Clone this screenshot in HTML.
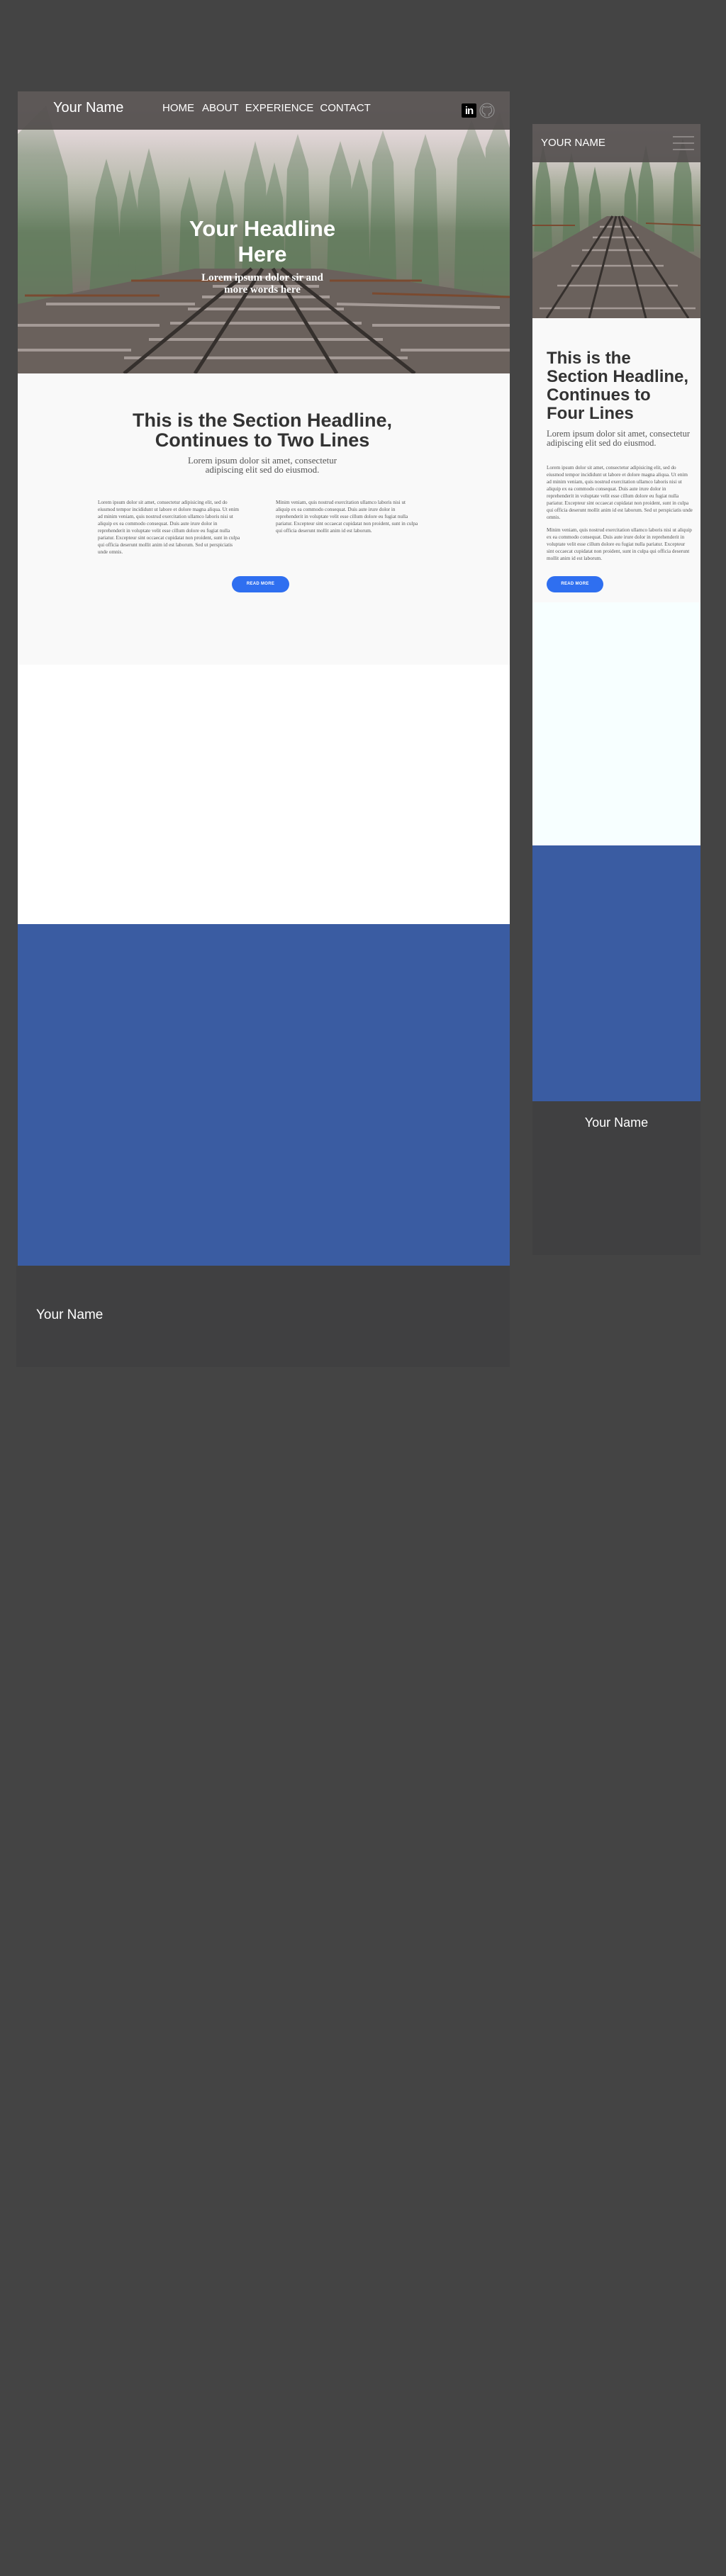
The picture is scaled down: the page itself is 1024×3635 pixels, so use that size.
<!DOCTYPE html>
<html><head><meta charset="utf-8">
<style>
*{margin:0;padding:0;box-sizing:border-box}
html,body{width:1024px;height:3635px;background:#444444;overflow:hidden}
body{position:relative;font-family:"Liberation Sans",sans-serif}
.abs{position:absolute}
.serif{font-family:"Liberation Serif",serif}
.hero{background:linear-gradient(180deg,#eadadc 0%,#d9cfcf 15%,#a9ae9c 32%,#7f8b74 48%,#76806b 62%,#7c736d 72%,#5f5752 85%,#3f3834 100%)}
.body7{font-family:"Liberation Serif",serif;font-size:7.2px;line-height:10px;color:#555}
.btn{background:#2f6ff0;color:#fff;border-radius:12px;font-size:6px;font-weight:bold;text-align:center;line-height:23px;letter-spacing:.3px}
</style></head><body>

<!-- DESKTOP -->
<div class="abs hero" style="left:25px;top:129px;width:694px;height:398px;overflow:hidden">
<svg width="694" height="398" style="position:absolute;left:0;top:0">
<defs><linearGradient id="fog" x1="0" y1="0" x2="0" y2="1"><stop offset="0" stop-color="#efe1e3" stop-opacity=".9"/><stop offset=".45" stop-color="#e0d6d6" stop-opacity=".35"/><stop offset="1" stop-color="#fff" stop-opacity="0"/></linearGradient></defs>
<g fill="#5e7a5a" opacity=".7">
<polygon points="0,60 40,20 70,120 80,330 0,330"/>
<polygon points="110,150 125,95 140,150 150,300 100,300"/>
<polygon points="145,170 158,110 170,170 175,300 140,300"/>
<polygon points="170,140 185,80 200,140 205,300 165,300"/>
<polygon points="230,170 242,120 254,170 258,300 226,300"/>
<polygon points="280,160 292,110 304,160 308,300 276,300"/>
<polygon points="320,130 335,70 350,130 355,300 315,300"/>
<polygon points="350,150 362,100 374,150 378,300 346,300"/>
<polygon points="380,110 395,60 410,110 415,300 375,300"/>
<polygon points="440,120 455,70 470,120 475,300 435,300"/>
<polygon points="470,140 482,95 494,140 498,300 466,300"/>
<polygon points="500,100 515,55 530,100 535,300 495,300"/>
<polygon points="560,110 575,60 590,110 595,300 555,300"/>
<polygon points="620,95 640,40 660,95 665,300 615,300"/>
<polygon points="660,80 680,30 694,80 694,300 655,300"/>
</g>
<rect width="694" height="200" fill="url(#fog)"/>
<polygon points="0,398 694,398 694,290 430,250 250,250 0,300" fill="#6a615c"/>
<g stroke="#b8aeaa" stroke-width="4" opacity=".75">
<line x1="290" y1="262" x2="410" y2="262"/><line x1="275" y1="275" x2="425" y2="275"/><line x1="260" y1="290" x2="440" y2="290"/><line x1="240" y1="307" x2="460" y2="307"/><line x1="215" y1="327" x2="485" y2="327"/><line x1="185" y1="350" x2="515" y2="350"/><line x1="150" y1="376" x2="550" y2="376"/><line x1="40" y1="300" x2="250" y2="300"/><line x1="450" y1="300" x2="680" y2="305"/><line x1="0" y1="330" x2="200" y2="330"/><line x1="500" y1="330" x2="694" y2="330"/><line x1="0" y1="365" x2="160" y2="365"/><line x1="540" y1="365" x2="694" y2="365"/>
</g>
<g stroke="#35302d" stroke-width="5">
<line x1="330" y1="250" x2="150" y2="398"/><line x1="345" y1="250" x2="250" y2="398"/>
<line x1="360" y1="250" x2="450" y2="398"/><line x1="372" y1="250" x2="560" y2="398"/>
</g>
<g stroke="#7a4a30" stroke-width="3"><line x1="160" y1="267" x2="290" y2="267"/><line x1="440" y1="267" x2="570" y2="267"/><line x1="10" y1="288" x2="200" y2="288"/><line x1="500" y1="285" x2="694" y2="290"/></g>
</svg>
</div>
<div class="abs" style="left:25px;top:129px;width:694px;height:54px;background:rgba(80,76,75,.92)"></div>
<div class="abs" style="left:75px;top:141px;color:#fff;font-size:20px">Your Name</div>
<div class="abs" style="left:229px;top:144px;color:#fff;font-size:15px"><span>HOME</span><span style="margin-left:11px">ABOUT</span><span style="margin-left:9px">EXPERIENCE</span><span style="margin-left:9px">CONTACT</span></div>
<div class="abs" style="left:651px;top:146px;width:21px;height:20px;background:#000;border-radius:2px;color:#fff;font-weight:bold;font-size:15px;line-height:21px;text-align:center;letter-spacing:-1px">in</div>
<svg class="abs" style="left:676px;top:145px" width="22" height="22" viewBox="0 0 22 22"><circle cx="11" cy="11" r="10" fill="none" stroke="#999" stroke-width="1"/><path d="M8 19v-3c-2-1-4-2-4-6 0-1 .5-2 1-2.5-.2-.7 0-1.8.3-2.2 1 0 2 .6 2.5 1 2-.5 4-.5 6 0 .5-.4 1.5-1 2.5-1 .3.4.5 1.5.3 2.2.5.5 1 1.5 1 2.5 0 4-2 5-4 6v3" fill="none" stroke="#999" stroke-width="1"/></svg>

<div class="abs" style="left:200px;top:305px;width:340px;text-align:center;color:#fff;font-weight:bold;font-size:31px;line-height:36px">Your Headline<br>Here</div>
<div class="abs serif" style="left:250px;top:384px;width:240px;text-align:center;color:#fff;font-weight:bold;font-size:15px;line-height:17px">Lorem ipsum dolor sir and<br>more words here</div>

<div class="abs" style="left:25px;top:527px;width:694px;height:411px;background:#f9f9f9"></div>
<div class="abs" style="left:120px;top:579px;width:500px;text-align:center;color:#333;font-weight:bold;font-size:27px;line-height:28px">This is the Section Headline,<br>Continues to Two Lines</div>
<div class="abs serif" style="left:220px;top:643px;width:300px;text-align:center;color:#555;font-size:13px;line-height:13px">Lorem ipsum dolor sit amet, consectetur<br>adipiscing elit sed do eiusmod.</div>
<div class="abs body7" style="left:138px;top:704px;width:205px">Lorem ipsum dolor sit amet, consectetur adipisicing elit, sed do eiusmod tempor incididunt ut labore et dolore magna aliqua. Ut enim ad minim veniam, quis nostrud exercitation ullamco laboris nisi ut aliquip ex ea commodo consequat. Duis aute irure dolor in reprehenderit in voluptate velit esse cillum dolore eu fugiat nulla pariatur. Excepteur sint occaecat cupidatat non proident, sunt in culpa qui officia deserunt mollit anim id est laborum. Sed ut perspiciatis unde omnis.</div>
<div class="abs body7" style="left:389px;top:704px;width:202px">Minim veniam, quis nostrud exercitation ullamco laboris nisi ut aliquip ex ea commodo consequat. Duis aute irure dolor in reprehenderit in voluptate velit esse cillum dolore eu fugiat nulla pariatur. Excepteur sint occaecat cupidatat non proident, sunt in culpa qui officia deserunt mollit anim id est laborum.</div>
<div class="abs btn" style="left:327px;top:813px;width:81px;height:23px">READ MORE</div>

<div class="abs" style="left:25px;top:938px;width:694px;height:366px;background:#fff"></div>
<div class="abs" style="left:25px;top:1304px;width:694px;height:482px;background:#3a5ca2"></div>
<div class="abs" style="left:23px;top:1786px;width:696px;height:143px;background:#404041"></div>
<div class="abs" style="left:51px;top:1845px;color:#fff;font-size:19px">Your Name</div>

<!-- MOBILE -->
<div class="abs hero" style="left:751px;top:175px;width:237px;height:274px;overflow:hidden">
<svg width="237" height="274" style="position:absolute;left:0;top:0">
<g fill="#5e7a5a" opacity=".7">
<polygon points="5,80 15,30 25,80 28,180 2,180"/><polygon points="45,90 55,40 65,90 68,180 42,180"/><polygon points="80,100 88,60 96,100 98,180 78,180"/><polygon points="130,100 138,60 146,100 148,180 128,180"/><polygon points="150,80 160,30 170,80 173,180 147,180"/><polygon points="200,70 212,20 224,70 228,180 196,180"/>
</g>
<polygon points="0,274 237,274 237,190 130,130 105,130 0,190" fill="#6a615c"/>
<g stroke="#b8aeaa" stroke-width="2.5" opacity=".75"><line x1="95" y1="145" x2="140" y2="145"/><line x1="85" y1="160" x2="150" y2="160"/><line x1="70" y1="178" x2="165" y2="178"/><line x1="55" y1="200" x2="185" y2="200"/><line x1="35" y1="228" x2="205" y2="228"/><line x1="10" y1="260" x2="230" y2="260"/></g>
<g stroke="#35302d" stroke-width="3"><line x1="113" y1="130" x2="20" y2="274"/><line x1="118" y1="130" x2="80" y2="274"/><line x1="122" y1="130" x2="160" y2="274"/><line x1="126" y1="130" x2="220" y2="274"/></g>
<g stroke="#7a4a30" stroke-width="2"><line x1="0" y1="143" x2="60" y2="143"/><line x1="160" y1="140" x2="237" y2="143"/></g>
</svg>
</div>
<div class="abs" style="left:751px;top:175px;width:237px;height:54px;background:rgba(84,80,79,.93)"></div>
<div class="abs" style="left:763px;top:193px;color:#fff;font-size:15px">YOUR NAME</div>
<div class="abs" style="left:949px;top:192px;width:30px;height:2px;background:#8a8584"></div>
<div class="abs" style="left:949px;top:201px;width:30px;height:2px;background:#8a8584"></div>
<div class="abs" style="left:949px;top:210px;width:30px;height:2px;background:#8a8584"></div>

<div class="abs" style="left:751px;top:449px;width:237px;height:401px;background:#f9f9f9"></div>
<div class="abs" style="left:771px;top:493px;width:215px;color:#333;font-weight:bold;font-size:24px;line-height:26px">This is the<br>Section Headline,<br>Continues to<br>Four Lines</div>
<div class="abs serif" style="left:771px;top:606px;width:215px;color:#555;font-size:12.5px;line-height:13px">Lorem ipsum dolor sit amet, consectetur adipiscing elit sed do eiusmod.</div>
<div class="abs body7" style="left:771px;top:655px;width:206px">Lorem ipsum dolor sit amet, consectetur adipisicing elit, sed do eiusmod tempor incididunt ut labore et dolore magna aliqua. Ut enim ad minim veniam, quis nostrud exercitation ullamco laboris nisi ut aliquip ex ea commodo consequat. Duis aute irure dolor in reprehenderit in voluptate velit esse cillum dolore eu fugiat nulla pariatur. Excepteur sint occaecat cupidatat non proident, sunt in culpa qui officia deserunt mollit anim id est laborum. Sed ut perspiciatis unde omnis.</div>
<div class="abs body7" style="left:771px;top:743px;width:206px">Minim veniam, quis nostrud exercitation ullamco laboris nisi ut aliquip ex ea commodo consequat. Duis aute irure dolor in reprehenderit in voluptate velit esse cillum dolore eu fugiat nulla pariatur. Excepteur sint occaecat cupidatat non proident, sunt in culpa qui officia deserunt mollit anim id est laborum.</div>
<div class="abs btn" style="left:771px;top:813px;width:80px;height:23px">READ MORE</div>

<div class="abs" style="left:751px;top:850px;width:237px;height:343px;background:#f7ffff"></div>
<div class="abs" style="left:751px;top:1193px;width:237px;height:361px;background:#3a5ca2"></div>
<div class="abs" style="left:751px;top:1554px;width:237px;height:217px;background:#404041"></div>
<div class="abs" style="left:751px;top:1574px;width:237px;text-align:center;color:#fff;font-size:18px">Your Name</div>
</body></html>
